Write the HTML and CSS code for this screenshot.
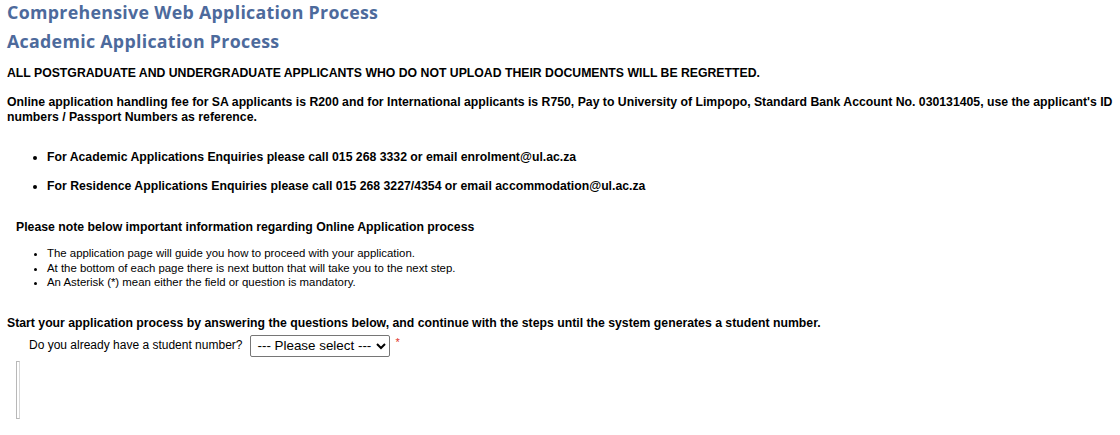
FILE: index.html
```html
<!DOCTYPE html>
<html>
<head>
<meta charset="utf-8">
<link rel="stylesheet" href="styles.css">
</head>
<body>
<div class="page">
  <h1 class="title">Comprehensive Web Application Process</h1>
  <h2 class="title sub">Academic Application Process</h2>
  <p class="warn">ALL POSTGRADUATE AND UNDERGRADUATE APPLICANTS WHO DO NOT UPLOAD THEIR DOCUMENTS WILL BE REGRETTED.</p>
  <p class="fee">Online application handling fee for SA applicants is R200 and for International applicants is R750, Pay to University of Limpopo, Standard Bank Account No. 030131405, use the applicant's ID numbers / Passport Numbers as reference.</p>
  <ul class="contacts">
    <li>For Academic Applications Enquiries please call 015 268 3332 or email enrolment@ul.ac.za</li>
    <li>For Residence Applications Enquiries please call 015 268 3227/4354 or email accommodation@ul.ac.za</li>
  </ul>
  <p class="note">Please note below important information regarding Online Application process</p>
  <ul class="info">
    <li>The application page will guide you how to proceed with your application.</li>
    <li>At the bottom of each page there is next button that will take you to the next step.</li>
    <li>An Asterisk (*) mean either the field or question is mandatory.</li>
  </ul>
  <p class="start">Start your application process by answering the questions below, and continue with the steps until the system generates a student number.</p>
  <div class="question">
    <label class="qlabel">Do you already have a student number?</label>
    <select class="qselect">
      <option>--- Please select ---</option>
      <option>Yes</option>
      <option>No</option>
    </select>
    <span class="req">*</span>
  </div>
  <div class="frame"></div>
</div>
</body>
</html>
```
FILE: styles.css
```css
body {
  margin: 0;
  font-family: "Liberation Sans", Arial, sans-serif;
  color: #000;
  background: #fff;
}
.page {
  padding: 0 0 0 7px;
}
.title {
  margin: 0;
  font-family: "Open Sans", "DejaVu Sans", sans-serif;
  font-weight: 700;
  font-size: 17.8px;
  letter-spacing: 0.3px;
  color: #4d6a9c;
  line-height: normal;
}
.sub {
  margin-top: 6px;
  line-height: 22px;
}
.warn {
  margin: 14px 0 0;
  font-size: 12.25px;
  font-weight: 700;
  line-height: 14px;
}
.fee {
  margin: 15px 0 0;
  font-size: 12.25px;
  font-weight: 700;
  line-height: 15px;
}
.contacts {
  margin: 25px 0 0;
  padding-left: 40px;
  font-size: 12.25px;
  font-weight: 700;
}
.contacts li {
  line-height: 15px;
  margin-bottom: 14px;
}
.note {
  margin: 26px 0 0 9px;
  font-size: 12.25px;
  font-weight: 700;
  line-height: 15px;
}
.info {
  margin: 11px 0 0;
  padding-left: 40px;
  font-size: 11.4px;
}
.info li {
  line-height: 14.5px;
}
.start {
  margin: 26px 0 0;
  font-size: 12.25px;
  font-weight: 700;
  line-height: 15px;
}
.question {
  margin: 4px 0 0 22px;
  display: flex;
  align-items: flex-start;
  font-size: 12px;
}
.qlabel {
  margin-top: 3px;
}
.qselect {
  margin-left: 8px;
  font-family: "Liberation Sans", Arial, sans-serif;
  font-size: 13.4px;
  height: 22px;
  width: 140px;
  border: 1px solid #767676;
  border-radius: 2px;
  background: #fff;
  color: #000;
  padding: 0 1px 0 2px;
}
.req {
  color: #e0302a;
  font-size: 11px;
  margin-left: 5px;
  margin-top: 1px;
}
.frame {
  margin: 4px 0 0 9px;
  width: 2px;
  height: 56px;
  border: 1px solid #b8b8b8;
  border-right-color: #d8d8d8;
}
```
